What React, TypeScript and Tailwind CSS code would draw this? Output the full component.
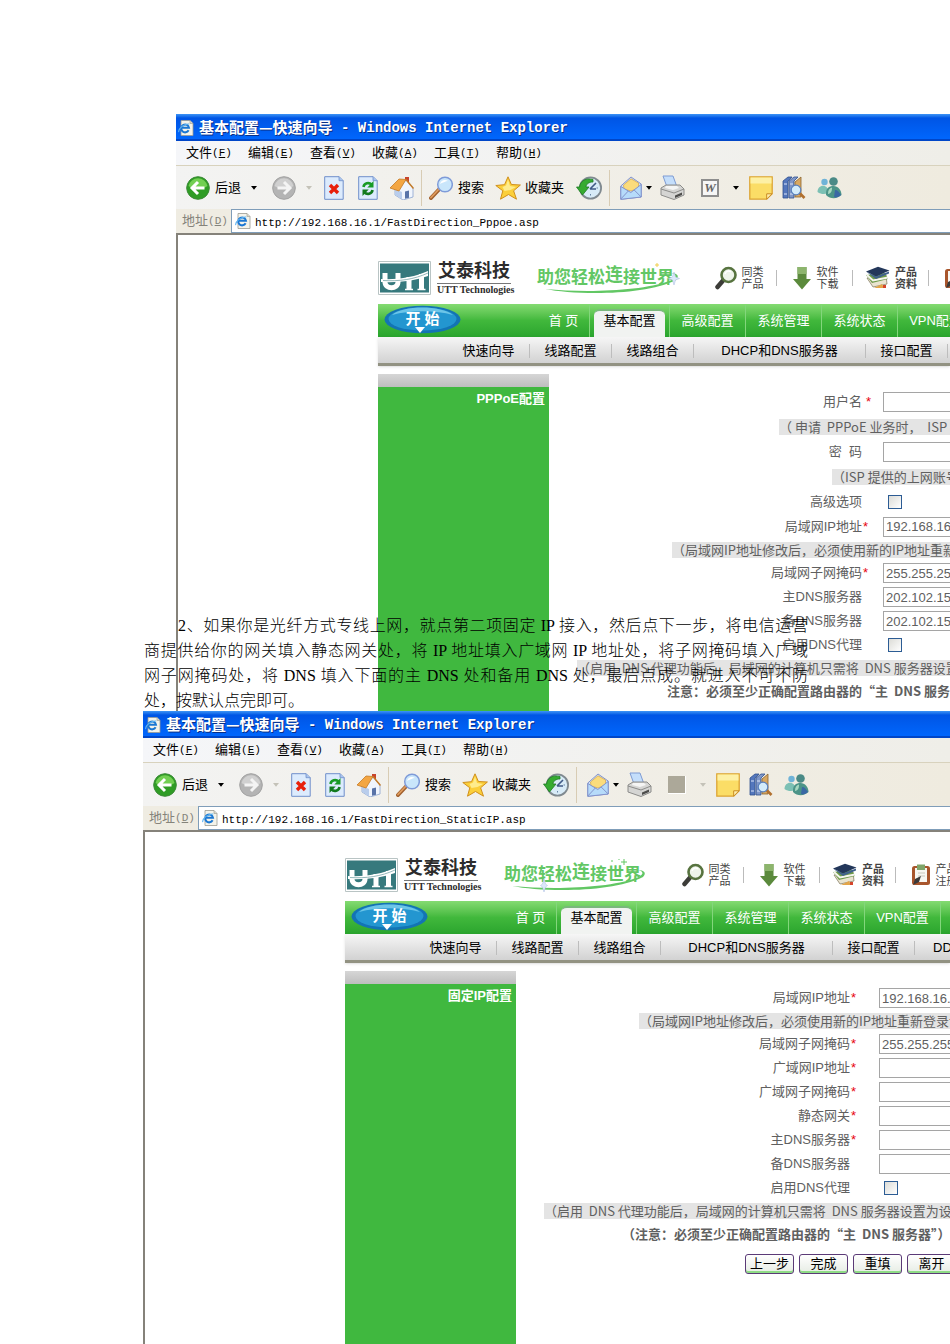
import type { ReactNode } from 'react';

type Field = {
  kind: 'text' | 'checkbox';
  label: string;
  value?: string;
  required?: boolean;
  spaced?: boolean;
};

type Note = {
  kind: 'note';
  text: ReactNode;
  indent: string;
  strong?: boolean;
};

type Row = Field | Note;

const menus = [
  ['文件', 'F'],
  ['编辑', 'E'],
  ['查看', 'V'],
  ['收藏', 'A'],
  ['工具', 'T'],
  ['帮助', 'H'],
];

const tabs = ['高级配置', '系统管理', '系统状态', 'VPN配置', '用户管理'];

const pppoeRows: Row[] = [
  { kind: 'text', label: '用户名', required: true, spaced: true },
  { kind: 'note', text: '（ 申请  PPPoE 业务时，  ISP 提供的上网账号）', indent: 'ml-[230px]' },
  { kind: 'text', label: '密  码' },
  { kind: 'note', text: '（ISP 提供的上网账号的密码）', indent: 'ml-[283px]' },
  { kind: 'checkbox', label: '高级选项' },
  { kind: 'text', label: '局域网IP地址', value: '192.168.16.1', required: true },
  { kind: 'note', text: '（局域网IP地址修改后，必须使用新的IP地址重新登录设备）', indent: 'ml-[123px]' },
  { kind: 'text', label: '局域网子网掩码', value: '255.255.255.0', required: true },
  { kind: 'text', label: '主DNS服务器', value: '202.102.152.3' },
  { kind: 'text', label: '备DNS服务器', value: '202.102.154.3' },
  { kind: 'checkbox', label: '启用DNS代理' },
  { kind: 'note', text: '（启用  DNS 代理功能后，局域网的计算机只需将  DNS 服务器设置为设备的地址）', indent: 'ml-7' },
  { kind: 'note', text: '注意：必须至少正确配置路由器的“主  DNS 服务器”', indent: 'ml-[118px]', strong: true },
];

const staticRows: Row[] = [
  { kind: 'text', label: '局域网IP地址', value: '192.168.16.1', required: true },
  { kind: 'note', text: '（局域网IP地址修改后，必须使用新的IP地址重新登录设备）', indent: 'ml-[123px]' },
  { kind: 'text', label: '局域网子网掩码', value: '255.255.255.0', required: true },
  { kind: 'text', label: '广域网IP地址', required: true },
  { kind: 'text', label: '广域网子网掩码', required: true },
  { kind: 'text', label: '静态网关', required: true },
  { kind: 'text', label: '主DNS服务器', required: true },
  { kind: 'text', label: '备DNS服务器' },
  { kind: 'checkbox', label: '启用DNS代理' },
  { kind: 'note', text: '（启用  DNS 代理功能后，局域网的计算机只需将  DNS 服务器设置为设备的地址）', indent: 'ml-7' },
  { kind: 'note', text: '（注意：必须至少正确配置路由器的“主  DNS 服务器”）', indent: 'ml-[106px]', strong: true },
];

const IePageIcon = () => (
  <svg viewBox="0 0 16 16" className="size-4 shrink-0" aria-hidden="true">
    <path d="M3 .5h9l3 3v12H3z" fill="#f4f3ea" stroke="#9a9a92" strokeWidth=".8" />
    <path d="M12 .5v3h3" fill="#d8d6c8" stroke="#9a9a92" strokeWidth=".6" />
    <path d="M10.6 10.3a3.900 3.900 0 1 1 .4-2.500H4" fill="none" stroke="#1b77d2" strokeWidth="2" />
    <path d="M.8 12.200C-.2 9 6 3.300 11.300 4" fill="none" stroke="#5db4f2" strokeWidth="1.100" />
  </svg>
);

const ArrowCircle = ({ forward }: { forward?: boolean }) => (
  <svg viewBox="0 0 24 24" className="size-6 shrink-0" aria-hidden="true">
    <circle cx="12" cy="12" r="11.300" fill={forward ? '#b4b4b4' : '#2f9c25'} stroke={forward ? '#a2a2a2' : '#3b8a36'} />
    <path d="M2.500 10a9.700 9.700 0 0 1 19 0c-5 3.500-13 4-19 0z" fill={forward ? '#d0d0d0' : '#72cf52'} />
    <path
      d={forward ? 'M5.500 12h12M12 6l6 6-6 6' : 'M18.500 12h-12M12 6l-6 6 6 6'}
      fill="none"
      stroke={forward ? '#f4f4f4' : '#fff'}
      strokeWidth="3"
    />
  </svg>
);

const Caret = ({ muted }: { muted?: boolean }) => (
  <svg viewBox="0 0 6 4" className="h-1 w-1.5 shrink-0" aria-hidden="true">
    <path d="M0 0h6L3 3.800z" fill={muted ? '#c4c2b8' : '#000'} />
  </svg>
);

const StopIcon = () => (
  <svg viewBox="0 0 20 24" className="h-6 w-5" aria-hidden="true">
    <path d="M.7.7h14.500l4 4v18.600H.7z" fill="#dcebfd" stroke="#6f8fca" />
    <path d="M15 .7v4h4.300" fill="#a9c4ee" stroke="#6f8fca" strokeWidth=".8" />
    <path d="M6 9l8 8M14 9l-8 8" stroke="#e8200c" strokeWidth="3.400" />
  </svg>
);

const RefreshIcon = () => (
  <svg viewBox="0 0 20 24" className="h-6 w-5" aria-hidden="true">
    <path d="M.7.7h14.500l4 4v18.600H.7z" fill="#dcebfd" stroke="#6f8fca" />
    <path d="M15 .7v4h4.300" fill="#a9c4ee" stroke="#6f8fca" strokeWidth=".8" />
    <path d="M5.500 11c.5-4 5.500-5 8-2.500" fill="none" stroke="#179a25" strokeWidth="2.600" />
    <path d="M15.500 5v6.500H9.300z" fill="#179a25" />
    <path d="M14.500 14c-.5 4-5.500 5-8 2.500" fill="none" stroke="#117a1e" strokeWidth="2.600" />
    <path d="M4.500 20v-6.500h6.200z" fill="#117a1e" />
  </svg>
);

const HomeIcon = () => (
  <svg viewBox="0 0 24 24" className="size-6" aria-hidden="true">
    <path d="M15 1h4v7h-4z" fill="#c8442c" />
    <path d="M10 11l6-7 7 8v9l-10 3-8-5v-6z" fill="#f0f5fd" stroke="#8aa3cf" strokeWidth=".8" />
    <path d="M5 13l7 3v7.500l-7-5z" fill="#b9cdec" />
    <path d="M0 12L9 3l7 .5L9 15z" fill="#f3a643" stroke="#c47a26" strokeWidth=".8" />
    <path d="M16 3.500l7.500 9" stroke="#c47a26" strokeWidth="1.500" />
    <path d="M15 15.500l4-1v7.300l-4 1z" fill="#5873a8" />
  </svg>
);

const SearchIcon = () => (
  <svg viewBox="0 0 24 24" className="size-6" aria-hidden="true">
    <path d="M2 22l8-8.500" stroke="#a1602e" strokeWidth="4" strokeLinecap="round" />
    <path d="M2 21.500l8-8.500" stroke="#e09d5f" strokeWidth="1.800" strokeLinecap="round" />
    <circle cx="16" cy="8.500" r="7.300" fill="#c9e6fb" stroke="#7f9bd8" strokeWidth="1.500" />
    <path d="M11 8c1-4 5-5 8-3-2 0-6 2-8 3z" fill="#fff" />
  </svg>
);

const StarIcon = () => (
  <svg viewBox="0 0 26 24" className="h-6 w-[26px] shrink-0" aria-hidden="true">
    <path d="M13 .8l3.400 7.700 9 .5-6.800 5.800 2.900 8.400-8-4.700-8 4.700 2.300-8.400L.8 9.500l8.700-.8z" fill="#fbcf3a" stroke="#cf8f1c" />
    <path d="M13 3.500l2 6.500 6 1-5.500 3-6 1-2-4 3.500-1.500z" fill="#feec8d" />
  </svg>
);

const HistoryIcon = () => (
  <svg viewBox="0 0 26 24" className="h-6 w-[26px]" aria-hidden="true">
    <circle cx="14.500" cy="12" r="10.600" fill="#d8ebf7" stroke="#808a90" strokeWidth="1.800" />
    <path d="M14 13l6-6M14 13h6" stroke="#3f5a86" strokeWidth="1.600" />
    <path d="M14.500 18v1.500M20.500 12H22M14.500 4v1.500" stroke="#6886a5" />
    <path d="M17 3.500C10 1.500 4 5 3.600 11H.5l6 8 6.500-8h-3c0-3 3-5 7-5z" fill="#36ab31" stroke="#1c7a22" strokeWidth=".8" />
  </svg>
);

const MailIcon = () => (
  <svg viewBox="0 0 22 24" className="h-6 w-[22px]" aria-hidden="true">
    <path d="M.8 10L11 1l10.200 7v13L.8 23.300z" fill="#cfe0f8" stroke="#8393cb" />
    <path d="M3.500 9L11 2.800 18.500 7v5L11 15 4 13z" fill="#fbdc7c" stroke="#d6a548" strokeWidth=".7" />
    <path d="M.8 10.500l10 6 10.400-8V21L.8 23.300z" fill="#b6dbfa" stroke="#8393cb" />
    <path d="M.8 23l7.500-8M21.200 21l-7-7" stroke="#8393cb" />
  </svg>
);

const PrinterIcon = () => (
  <svg viewBox="0 0 25 25" className="size-[25px]" aria-hidden="true">
    <path d="M3 1h10l4 11H7z" fill="#c4defb" stroke="#7e9bd3" />
    <path d="M1 13l5-3h14l4 4v6l-10 4.500L1 20z" fill="#d5d5d3" stroke="#8c8c8a" />
    <path d="M1 14l13 4 10-4" fill="none" stroke="#8c8c8a" />
    <path d="M6 11h11l2 2-6 2-8-2z" fill="#f5f5f4" />
    <path d="M15 20.500l7-3v2.500l-7 3z" fill="#4e4e4c" />
  </svg>
);

const WordIcon = () => (
  <span className="flex size-[18px] items-center justify-center border-2 border-[#8e8e8e] bg-[#f6f6f6] font-['Liberation_Serif',serif] text-[13px] leading-none font-bold text-[#666] italic">
    W
  </span>
);

const NoteIcon = () => (
  <svg viewBox="0 0 24 24" className="size-6" aria-hidden="true">
    <path d="M.8.8h22.400v17l-5.500 5.400H.8z" fill="#fbdd66" stroke="#dca434" strokeWidth="1.300" />
    <path d="M1.500 1.500h21v6h-21z" fill="#fdf0a5" />
    <path d="M23 17.800h-5.300v5.400z" fill="#fff0ae" stroke="#c98a20" />
  </svg>
);

const BooksIcon = () => (
  <svg viewBox="0 0 24 24" className="size-6" aria-hidden="true">
    <path d="M1 5l5-4h4L6 5v17H1z" fill="#5477bd" stroke="#31508e" strokeWidth=".8" />
    <path d="M7 5l5-4h4l-4 4v17H7z" fill="#7f97c9" stroke="#31508e" strokeWidth=".8" />
    <path d="M13 6l6-5v20h-6z" fill="#d9a860" stroke="#8a6530" strokeWidth=".8" />
    <path d="M2 8h3M2 18h3M8 8h3M8 18h3" stroke="#dbe5f7" />
    <path d="M17.500 17l5 5" stroke="#b1702f" strokeWidth="2.600" />
    <circle cx="14" cy="14" r="4.800" fill="#d3ecfb" stroke="#5980bd" strokeWidth="1.200" />
  </svg>
);

const MessengerIcon = () => (
  <svg viewBox="0 0 25 24" className="h-6 w-[25px]" aria-hidden="true">
    <circle cx="7.500" cy="6" r="3.200" fill="#6fb3d8" />
    <path d="M.5 16c0-5 4-7 7-6s4 4 3.500 7c-3 1.500-7 1.500-10.500-1z" fill="#7cc0b4" />
    <circle cx="16.500" cy="5.500" r="4.300" fill="#4a8a86" />
    <path d="M9 19c-.5-7 3-9 7.500-9s8 4 8 9c-4 4-11 4.500-15.500 0z" fill="#4c9488" />
    <path d="M11 18c0-4 1.500-6 4-6.500 0 4-1 6-4 6.500z" fill="#a7d8c0" />
    <path d="M18 14c3 0 4 2 6 5-2 2-5 3-7 2z" fill="#3a67a4" />
  </svg>
);

const UttLogo = () => (
  <svg viewBox="0 0 53 34" className="h-[34px] w-[53px] shrink-0" role="img" aria-label="UTT">
    <path d="M.5.5h52v33H.5z" fill="#fff" stroke="#b9c4c4" />
    <path d="M2 2.500h49v29H2z" fill="#36797d" />
    <path d="M7 12v9c0 7.500 13 7.500 13 0v-9" fill="none" stroke="#fff" strokeWidth="5" />
    <path d="M3 18c16 1 34-2 47-8v5C36 20 20 22 3 21z" fill="#fff" />
    <path d="M31 16v12M43.500 13v15" stroke="#fff" strokeWidth="5" />
    <path d="M27 28.500h8M39.500 28.500h8" stroke="#fff" strokeWidth="1.500" />
    <path d="M5 19.500c16 1 31-1 45-7.500" fill="none" stroke="#78a5a8" strokeWidth=".8" />
  </svg>
);

const Slogan = ({ variant }: { variant: 'pppoe' | 'static' }) => (
  <div className="relative ml-[26px] h-8 w-[143px] shrink-0 font-bold whitespace-nowrap text-[#62c764]">
    <p className="flex items-baseline text-[17px] leading-8">
      助您轻松<span className="relative -top-0.5 text-lg">连</span>接世界
    </p>
    <svg viewBox="0 0 143 34" className="absolute inset-x-0 top-0 h-[34px] w-[143px]" aria-hidden="true">
      <path d="M8 27c30 6 100 7 131-9 4-4 1-7-5-7 8 2 4 6-2 8C105 29 50 31 8 27z" fill="#62c764" />
      {variant === 'pppoe' ? (
        <>
          <path d="M137 10l1.500 5 4 1.500-4 1.500-1.500 5-1.500-5-4-1.500 4-1.500z" fill="#dce8fb" stroke="#a4b8de" strokeWidth=".5" />
          <path d="M120 1v4M118 3h4" stroke="#f1cf4c" />
        </>
      ) : (
        <>
          <path d="M40 20l1.500 5 2 1.500-2 1.500-1.500 5-1.500-5-2-1.500 2-1.500z" fill="#dce8fb" stroke="#a4b8de" strokeWidth=".5" />
          <path d="M120 0v6M117 3h6M107 2h2M114 0h2" stroke="#62c764" />
        </>
      )}
    </svg>
  </div>
);

const LensIcon = () => (
  <svg viewBox="0 0 22 24" className="h-6 w-[22px]" aria-hidden="true">
    <path d="M2.500 21l6-7" stroke="#3c3c38" strokeWidth="4.500" strokeLinecap="round" />
    <circle cx="13.500" cy="9" r="7" fill="#eef4ea" stroke="#57733f" strokeWidth="2.600" />
    <path d="M10 8c1-3 4-4 6-2" stroke="#fff" strokeWidth="1.500" fill="none" />
  </svg>
);

const DownloadIcon = () => (
  <svg viewBox="0 0 20 24" className="h-6 w-5" aria-hidden="true">
    <path d="M5.500 1h9v12H19l-9 10.500L1 13h4.500z" fill="#5b8a3c" />
    <path d="M5.500 1h9v7h-9z" fill="#8db56d" />
  </svg>
);

const LibraryIcon = () => (
  <svg viewBox="0 0 25 24" className="h-6 w-[25px]" aria-hidden="true">
    <path d="M2 12l6 9 14-3-1-9z" fill="#e9e4d0" stroke="#7b7258" strokeWidth=".7" />
    <path d="M1 9l6 8 16-4-3-6z" fill="#6d9a4a" />
    <path d="M2 9l6 5.500 15-3" fill="none" stroke="#f6f6ee" strokeWidth="2" />
    <path d="M1 5.500L13 .8l11.500 3.700L11 10.500z" fill="#23375a" />
    <path d="M1 5.500l10 5 13-5v2L11 13z" fill="#40608d" />
    <path d="M9 22l8-4 2 4" fill="#e3a548" />
    <path d="M18 19h3v3h-3z" fill="#d5452b" />
  </svg>
);

const ClipboardIcon = () => (
  <svg viewBox="0 0 20 24" className="h-6 w-5" aria-hidden="true">
    <rect x="1" y="3" width="18" height="19" rx="2.500" fill="#a8552c" />
    <path d="M4 5h12v14H4z" fill="#f7f6f1" />
    <path d="M6 1.500h8V7H6z" fill="#7fa56a" />
    <path d="M7 10h7M7 13h7" stroke="#c9c7bd" />
    <path d="M2 22l2-6 6-3-2 6z" fill="#3a3a3a" />
  </svg>
);

const quickLinks = [
  { icon: <LensIcon />, lines: ['同类', '产品'] },
  { icon: <DownloadIcon />, lines: ['软件', '下载'] },
  { icon: <LibraryIcon />, lines: ['产品', '资料'], strong: true },
  { icon: <ClipboardIcon />, lines: ['产品', '注册'] },
];

const Toolbar = ({ wordEnabled }: { wordEnabled: boolean }) => (
  <div className="flex h-[43px] shrink-0 items-center bg-linear-to-r from-[#f3f3f2] to-[#efebdf] pl-2.5 text-[13px] whitespace-nowrap text-black *:shrink-0">
    <button type="button" className="flex items-center gap-[5px]">
      <ArrowCircle />
      后退
    </button>
    <button type="button" aria-label="后退列表" className="ml-2.5"><Caret /></button>
    <button type="button" aria-label="前进" className="ml-[15px]"><ArrowCircle forward /></button>
    <button type="button" aria-label="前进列表" className="ml-2.5"><Caret muted /></button>
    <button type="button" aria-label="停止" className="ml-3"><StopIcon /></button>
    <button type="button" aria-label="刷新" className="ml-3.5"><RefreshIcon /></button>
    <button type="button" aria-label="主页" className="ml-3"><HomeIcon /></button>
    <span className="mx-[7px] h-9 w-px bg-[#d8ccb4]" />
    <button type="button" className="flex items-center gap-[5px]">
      <SearchIcon />
      搜索
    </button>
    <button type="button" className="ml-[11px] flex items-center gap-1">
      <StarIcon />
      收藏夹
    </button>
    <button type="button" aria-label="历史" className="ml-3"><HistoryIcon /></button>
    <span className="mr-2.5 ml-[7px] h-9 w-px bg-[#d8ccb4]" />
    <button type="button" aria-label="邮件" className="flex items-center gap-1">
      <MailIcon />
      <Caret />
    </button>
    <button type="button" aria-label="打印" className="ml-2"><PrinterIcon /></button>
    <button type="button" aria-label="编辑" className="ml-4 flex items-center gap-3.5">
      {wordEnabled ? <WordIcon /> : <span className="size-[18px] border-r border-b border-white bg-[#aca899]" />}
      <Caret muted={!wordEnabled} />
    </button>
    <button type="button" aria-label="讨论" className="ml-2.5"><NoteIcon /></button>
    <button type="button" aria-label="信息检索" className="ml-[9px]"><BooksIcon /></button>
    <button type="button" aria-label="Messenger" className="ml-[11px]"><MessengerIcon /></button>
  </div>
);

const SiteHeader = ({ variant }: { variant: 'pppoe' | 'static' }) => (
  <header>
    <div className="flex h-[69px] items-center pt-4">
      <UttLogo />
      <div className="ml-[6px] w-[74px] shrink-0 pt-0.5 whitespace-nowrap text-[#2c2c2c]">
        <p className="border-b border-[#777] pb-0.5 text-center text-lg leading-5 font-bold">艾泰科技</p>
        <p className="font-['Liberation_Serif',serif] text-[10px] leading-3 font-bold">UTT Technologies</p>
      </div>
      <Slogan variant={variant} />
      <ul className="ml-[21px] flex shrink-0 items-center">
        {quickLinks.map((link) => (
          <li key={link.lines.join('')} className="relative w-[76px]">
            <a href="#" className="flex items-center justify-center gap-[5px]">
              {link.icon}
              <span className={`text-[11px] leading-3 whitespace-nowrap text-[#444] ${link.strong ? 'font-bold' : ''}`}>
                {link.lines[0]}
                <br />
                {link.lines[1]}
              </span>
            </a>
            <span className="absolute top-1 right-0 h-4 w-px bg-[#bbb]" />
          </li>
        ))}
      </ul>
    </div>

    <nav className="flex h-[33px] items-end bg-linear-to-b from-[#84db72] via-[#41b83c] to-[#2aa52e] text-[13px] whitespace-nowrap text-white *:shrink-0">
      <a href="#" className="relative ml-1.5 h-8 w-[77px] text-center leading-7 font-bold text-white">
        <svg viewBox="0 0 77 32" className="absolute inset-0 h-8 w-[77px]" aria-hidden="true">
          <ellipse cx="38.500" cy="14.500" rx="38" ry="13.800" fill="#1374b4" />
          <ellipse cx="38.500" cy="14" rx="34" ry="11.500" fill="#2396d0" />
          <path d="M8 10C18 0 58 0 69 10c-18-5-43-5-61 0z" fill="#6cc5e8" />
          <path d="M31 22h10l-5 6z" fill="#fff" />
        </svg>
        <span className="relative text-[15px]">开 始</span>
      </a>
      <a href="#" className="ml-[77px] w-[52px] border-r border-[#83d67c] text-center leading-8">首  页</a>
      <a href="#" className="mx-1 w-[71px] rounded-t-md border-t-2 border-[#7ab87c] bg-[#f1f3f1] pb-1.5 text-center leading-5 text-black">
        基本配置
      </a>
      {tabs.map((tab) => (
        <a key={tab} href="#" className="w-[76px] border-l border-[#83d67c] text-center leading-8">
          {tab}
        </a>
      ))}
    </nav>

    <nav className="flex h-[29px] items-center border-b-3 border-[#929282] bg-linear-to-b from-[#f6f6f6] to-[#d2d2d2] pt-0.5 pl-[70px] text-[13px] whitespace-nowrap text-black shadow-sm *:shrink-0">
      <a href="#" className="w-[82px] border-r border-[#bdbdbd] text-center leading-3.5">快速向导</a>
      <a href="#" className="w-[82px] border-r border-[#bdbdbd] text-center leading-3.5">线路配置</a>
      <a href="#" className="w-[82px] border-r border-[#bdbdbd] text-center leading-3.5">线路组合</a>
      <a href="#" className="w-[172px] border-r border-[#bdbdbd] text-center leading-3.5">DHCP和DNS服务器</a>
      <a href="#" className="w-[82px] border-r border-[#bdbdbd] text-center leading-3.5">接口配置</a>
      <a href="#" className="pl-[18px] leading-3.5">DDNS配置</a>
    </nav>
  </header>
);

const ConfigForm = ({ rows, variant }: { rows: Row[]; variant: 'pppoe' | 'static' }) => {
  const isPppoe = variant === 'pppoe';

  return (
    <form className={`shrink-0 pt-[15px] text-[13px] whitespace-pre text-[#606060] ${isPppoe ? 'pb-2' : ''}`}>
      {rows.map((row, i) => {
        if (row.kind === 'note') {
          // the first notes of the PPPoE form stand a little further apart
          const height = row.strong ? 'h-6' : isPppoe && i < 6 ? 'h-[25px]' : 'h-[22px]';
          return (
            <div key={i} className={`flex items-center ${height}`}>
              <p
                className={`font-['Liberation_Sans_Narrow','Noto_Sans_CJK_SC',sans-serif] leading-4 ${row.indent} ${row.strong ? 'font-bold' : 'bg-[#e4e4e4]'}`}
              >
                {row.text}
              </p>
            </div>
          );
        }

        const id = `${variant}-${i}`;
        return (
          <div key={i} className={`flex items-center ${isPppoe && i < 6 ? 'h-[25px]' : 'h-6'}`}>
            <label htmlFor={id} className={`text-right ${isPppoe ? 'w-[313px]' : 'w-[334px]'}`}>
              {row.label}
            </label>
            <span className={`text-red-600 ${isPppoe ? 'w-[21px]' : 'w-[29px]'} ${row.spaced ? 'pl-1' : 'pl-px'}`}>
              {row.required ? '*' : ''}
            </span>
            {row.kind === 'text' ? (
              <input
                id={id}
                type={row.label.startsWith('密') ? 'password' : 'text'}
                defaultValue={row.value}
                className="h-5 w-[160px] border border-[#a5a5a5] bg-white px-0.5 text-[13px] text-[#606060]"
              />
            ) : (
              <input
                id={id}
                type="checkbox"
                className="ml-[5px] size-3.5 appearance-none border border-[#2c5c94] bg-linear-to-br from-[#dcdcd7] to-white checked:bg-[#2c5c94]"
              />
            )}
          </div>
        );
      })}
      {!isPppoe && (
        <div className="mt-2 ml-[229px] flex gap-[5px]">
          {['上一步', '完成', '重填', '离开'].map((name) => (
            <button
              key={name}
              type="button"
              className="h-5 w-[49px] rounded-[3px] border border-[#5b3a77] bg-linear-to-b from-white to-[#e6ece4] text-center leading-4 text-black shadow-[inset_0_-2px_0_#8fdc86]"
            >
              {name}
            </button>
          ))}
        </div>
      )}
    </form>
  );
};

type BrowserProps = {
  variant: 'pppoe' | 'static';
  url: string;
  heading: string;
  rows: Row[];
};

const BrowserWindow = ({ variant, url, heading, rows }: BrowserProps) => (
  <div className="flex grow flex-col overflow-hidden bg-white">
    <div className="flex h-[27px] shrink-0 items-center gap-[5px] bg-linear-to-b from-[#3d94f5] via-[#0055e5] via-15% to-[#0068ff] pl-0.5 font-bold whitespace-pre text-white shadow-[inset_0_-2px_0_#0046c8]">
      <IePageIcon />
      <h2 className="flex items-center [text-shadow:1px_1px_#0a2f86]">
        <span className="font-['Noto_Sans_CJK_SC',sans-serif] text-[15px]">基本配置—快速向导</span>
        <span className="font-['Liberation_Mono',monospace] text-sm"> - Windows Internet Explorer</span>
      </h2>
    </div>

    <div className="flex h-[25px] shrink-0 items-center border-b border-[#d8d2bd] bg-linear-to-r from-[#f5f6f9] to-[#efeee8] pl-2.5 text-[13px] text-black">
      {menus.map(([name, key]) => (
        <button key={key} type="button" className="flex w-[62px] shrink-0 items-center">
          {name}
          <span className="font-['Liberation_Mono',monospace] text-[11px]">
            (<u>{key}</u>)
          </span>
        </button>
      ))}
    </div>

    <Toolbar wordEnabled={variant === 'pppoe'} />

    <div className="flex h-6 shrink-0 items-stretch bg-[#efece2]">
      <label htmlFor={`${variant}-url`} className="flex w-[55px] items-center pl-1.5 text-[13px] whitespace-nowrap text-[#85837a]">
        地址
        <span className="font-['Liberation_Mono',monospace] text-[11px]">
          (<u>D</u>)
        </span>
      </label>
      <div className="flex grow items-center gap-1 border border-r-0 border-[#7f9db9] bg-white pl-[3px]">
        <IePageIcon />
        <input
          id={`${variant}-url`}
          type="text"
          defaultValue={url}
          className="min-w-0 grow pt-1 font-['Liberation_Mono',monospace] text-[11px] text-black outline-none"
        />
      </div>
    </div>

    <div className="flex grow flex-col border-t-2 border-l-2 border-[#85827a] pl-[200px]">
      <SiteHeader variant={variant} />
      <div className="flex grow pt-2">
        <aside className="flex w-[171px] shrink-0 flex-col">
          <div className="h-[13px] bg-linear-to-b from-[#d6d6d6] to-[#bebebe]" />
          <h3 className="grow bg-[#40b83f] pr-1 text-right text-[13px] leading-6 font-bold text-white">{heading}</h3>
        </aside>
        <ConfigForm rows={rows} variant={variant} />
      </div>
    </div>
  </div>
);

export default function App() {
  return (
    <main className="flex min-h-screen flex-col overflow-hidden bg-white pt-[114px] font-['Liberation_Sans','Noto_Sans_CJK_SC',sans-serif]">
      <section className="relative flex pl-44">
        <BrowserWindow
          variant="pppoe"
          url="http://192.168.16.1/FastDirection_Pppoe.asp"
          heading="PPPoE配置"
          rows={pppoeRows}
        />
        {/* The instructions run over the lower part of the first window */}
        <p className="absolute -bottom-0.5 left-36 w-[664px] font-['Liberation_Serif','Noto_Sans_CJK_SC',serif] text-base leading-[25px] font-light whitespace-nowrap text-black *:block">
          <span className="pl-[34px] [text-align-last:justify]">
            2、如果你是光纤方式专线上网，就点第二项固定 IP 接入，然后点下一步，将电信运营
          </span>
          <span className="[text-align-last:justify]">
            商提供给你的网关填入静态网关处，将 IP 地址填入广域网 IP 地址处，将子网掩码填入广域
          </span>
          <span className="[text-align-last:justify]">
            网子网掩码处，将 DNS 填入下面的主 DNS 处和备用 DNS 处，最后点成。就进入不可不防
          </span>
          <span>处，按默认点完即可。</span>
        </p>
      </section>

      <section className="relative flex grow pl-[143px]">
        <BrowserWindow
          variant="static"
          url="http://192.168.16.1/FastDirection_StaticIP.asp"
          heading="固定IP配置"
          rows={staticRows}
        />
      </section>
    </main>
  );
}
